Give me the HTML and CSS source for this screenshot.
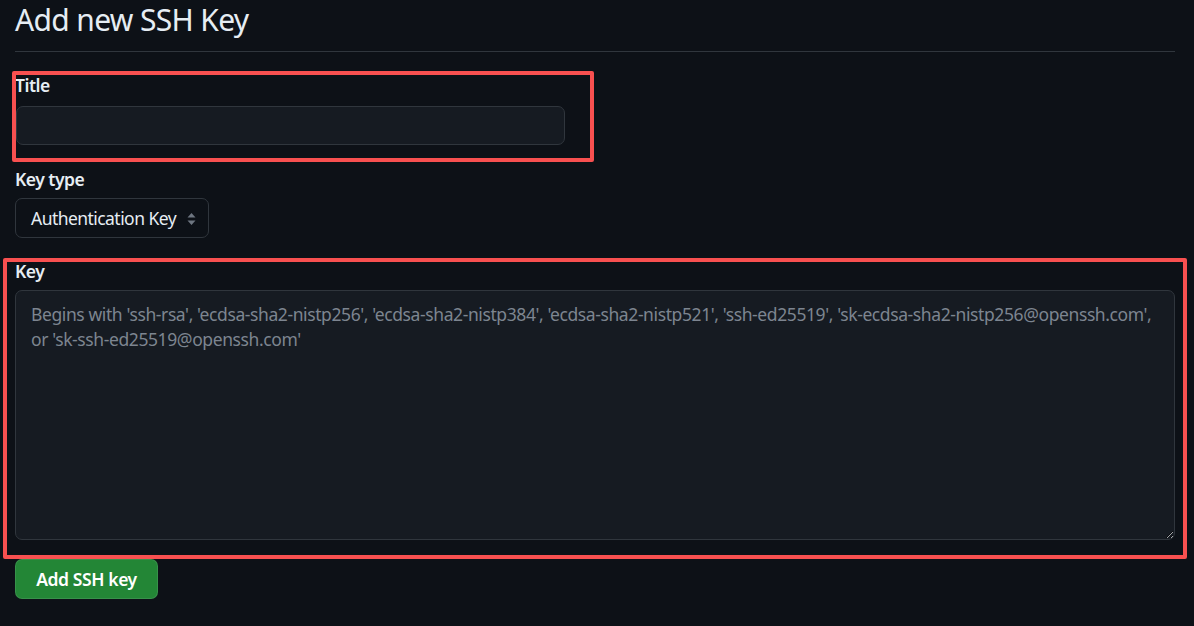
FILE: index.html
```html
<!DOCTYPE html>
<html lang="en">
<head>
<meta charset="utf-8">
<title>Add new SSH Key</title>
<link rel="stylesheet" href="styles.css">
</head>
<body>
<main class="page">
  <h2 class="title">Add new SSH Key</h2>
  <form class="form">
    <div class="group group-title">
      <label class="label" for="title">Title</label>
      <input class="input" id="title" type="text">
    </div>
    <div class="group group-type">
      <label class="label">Key type</label>
      <div class="select">
        <span>Authentication Key</span>
        <svg class="chev" width="9" height="14" viewBox="0 0 9 14"><path d="M4.5 1 L8.5 5.5 L0.5 5.5 Z M4.5 13 L8.5 8.5 L0.5 8.5 Z" fill="#6e7681"/></svg>
      </div>
    </div>
    <div class="group group-key">
      <label class="label" for="key">Key</label>
      <textarea class="textarea" id="key" placeholder="Begins with 'ssh-rsa', 'ecdsa-sha2-nistp256', 'ecdsa-sha2-nistp384', 'ecdsa-sha2-nistp521', 'ssh-ed25519', 'sk-ecdsa-sha2-nistp256@openssh.com', or 'sk-ssh-ed25519@openssh.com'"></textarea>
    </div>
    <button class="btn" type="button">Add SSH key</button>
  </form>
  <div class="mark mark-1"></div>
  <div class="mark mark-2"></div>
</main>
</body>
</html>
```
FILE: styles.css
```css
html, body {
  margin: 0;
  padding: 0;
  background: #0d1117;
  color-scheme: dark;
}
body {
  font-family: "Noto Sans", "Open Sans", sans-serif;
  font-size: 17.5px;
  line-height: 25px;
  letter-spacing: -0.55px;
  color: #e6edf3;
}
.page {
  position: relative;
  padding: 0 19px 0 15px;
  height: 626px;
  box-sizing: border-box;
}
.title {
  margin: 0;
  padding-top: 0;
  height: 52px;
  box-sizing: border-box;
  font-size: 30px;
  line-height: 40px;
  font-weight: 400;
  letter-spacing: -0.65px;
  border-bottom: 1px solid #30363d;
  color: #e6edf3;
}
.form {
  display: flex;
  flex-direction: column;
  align-items: flex-start;
}
.group {
  display: flex;
  flex-direction: column;
  align-items: flex-start;
  width: 100%;
}
.label {
  font-weight: 600;
  font-size: 17.5px;
  line-height: 25px;
  height: 25px;
  letter-spacing: -0.5px;
  color: #e6edf3;
}
.group-title { margin-top: 21px; }
.group-title .label { margin-bottom: 8px; }
.input {
  margin: 0 0 0 1px;
  width: 549px;
  height: 39px;
  box-sizing: border-box;
  background: #161b22;
  border: 1px solid #30363d;
  border-radius: 7px;
  color: #e6edf3;
  font: inherit;
  padding: 0 15px;
}
.group-type { margin-top: 22px; }
.group-type .label { margin-bottom: 6px; }
.select {
  display: flex;
  align-items: center;
  gap: 11px;
  height: 40px;
  box-sizing: border-box;
  padding: 1px 12px 0 15px;
  border: 1px solid #30363d;
  border-radius: 7px;
  background: #0d1117;
  color: #e6edf3;
}
.chev { display: block; }
.group-key { margin-top: 21px; }
.group-key .label { margin-bottom: 6px; }
.textarea {
  display: block;
  margin: 0;
  width: 100%;
  height: 250px;
  box-sizing: border-box;
  background: #161b22;
  border: 1px solid #30363d;
  border-radius: 7px;
  color: #e6edf3;
  font: inherit;
  letter-spacing: -0.4px;
  line-height: 25px;
  padding: 11px 22px 11px 15px;
  resize: vertical;
}
.textarea::placeholder {
  color: #7d8590;
  opacity: 1;
}
.btn {
  margin-top: 19px;
  width: 143px;
  height: 40px;
  box-sizing: border-box;
  background: #238636;
  border: 1px solid rgba(240, 246, 252, 0.1);
  border-radius: 7px;
  color: #ffffff;
  font: inherit;
  font-weight: 600;
  letter-spacing: -0.4px;
  padding: 0;
}
.mark {
  position: absolute;
  border: 4px solid #f85050;
  border-radius: 2px;
  box-sizing: border-box;
  pointer-events: none;
}
.mark-1 { left: 12px; top: 71px; width: 582px; height: 91px; }
.mark-2 { left: 3px; top: 258px; width: 1184px; height: 301px; }
```
